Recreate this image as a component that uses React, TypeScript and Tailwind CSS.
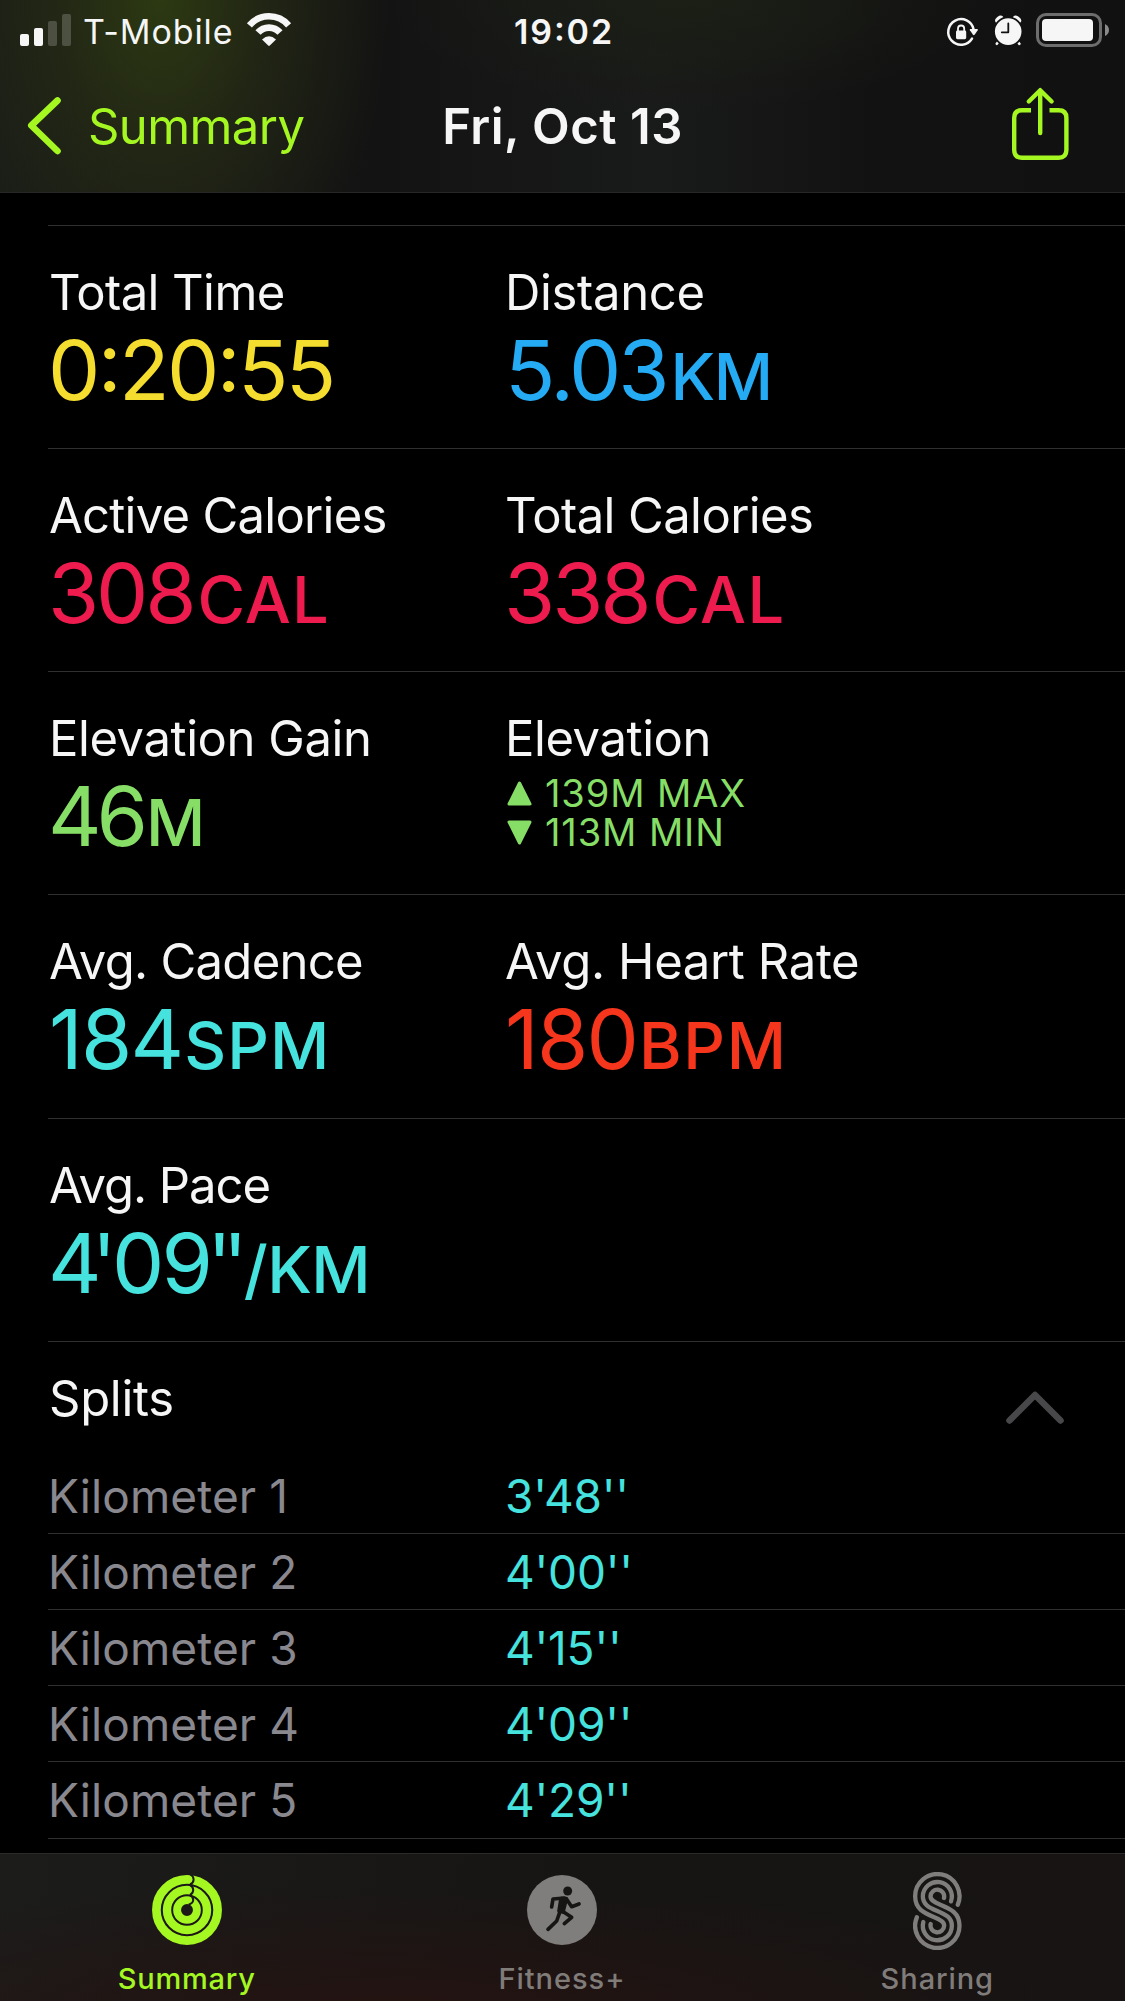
import React from 'react';

interface Metric {
    label: string;
    labelClass: string;
    value?: React.ReactNode;
    valueClass?: string;
    unit?: string;
    unitClass?: string;
    color: string;
    range?: boolean;
}

const METRIC_ROWS: Metric[][] = [
    [
        { label: 'Total Time', labelClass: 'tracking-[-0.59px]', value: '0:20:55', valueClass: 'tracking-[-2.65px]', color: 'text-[#f4dd2e]' },
        { label: 'Distance', labelClass: 'tracking-[-0.33px]', value: '5.03', valueClass: 'pl-px tracking-[-3.03px]', unit: 'KM', unitClass: 'ml-1 tracking-[-1.5px]', color: 'text-[#24abf3]' },
    ],
    [
        { label: 'Active Calories', labelClass: 'tracking-[-0.74px]', value: '308', valueClass: 'tracking-[-3.2px]', unit: 'CAL', unitClass: 'ml-1 tracking-[1.1px]', color: 'text-[#ee1b4e]' },
        { label: 'Total Calories', labelClass: 'tracking-[-0.6px]', value: '338', valueClass: 'tracking-[-3.12px]', unit: 'CAL', unitClass: 'ml-1 tracking-[1.3px]', color: 'text-[#ee1b4e]' },
    ],
    [
        { label: 'Elevation Gain', labelClass: 'tracking-[-0.44px]', value: '46', valueClass: 'tracking-[-5px]', unit: 'M', unitClass: 'ml-[3px]', color: 'text-[#87de67]' },
        { label: 'Elevation', labelClass: 'tracking-[-0.44px]', color: 'text-[#87de67]', range: true },
    ],
    [
        { label: 'Avg. Cadence', labelClass: 'tracking-[-0.71px]', value: '184', valueClass: 'pl-px tracking-[-1.8px]', unit: 'SPM', unitClass: 'ml-0.5 tracking-[1px]', color: 'text-[#46e2de]' },
        { label: 'Avg. Heart Rate', labelClass: 'tracking-[-0.38px]', value: '180', valueClass: 'pl-px tracking-[-1.8px]', unit: 'BPM', unitClass: 'ml-0.5 tracking-[1.6px]', color: 'text-[#f6361c]' },
    ],
    [
        {
            label: 'Avg. Pace',
            labelClass: 'tracking-[-1.04px]',
            value: (
                <>
                    <span className="tracking-[-10px]">4</span>
                    <span className="tracking-[-4.5px]">'</span>
                    <span className="tracking-[-3px]">0</span>
                    <span className="tracking-[-6px]">9</span>
                    <span className="tracking-[-9px]">''</span>
                </>
            ),
            unit: '/KM',
            unitClass: 'ml-[5px] tracking-[-0.5px]',
            color: 'text-[#46e2de]',
        },
    ],
];

const SPLITS = [
    { name: 'Kilometer 1', pace: "3'48''" },
    { name: 'Kilometer 2', pace: "4'00''" },
    { name: 'Kilometer 3', pace: "4'15''" },
    { name: 'Kilometer 4', pace: "4'09''" },
    { name: 'Kilometer 5', pace: "4'29''" },
];

const StatusBar: React.FC = () => (
    <div className="grid h-16 grid-cols-[1fr_auto_1fr] items-center text-[34px] leading-[42px] text-[#f5f6f5]">
        <div className="flex items-center pl-5">
            <svg width="51" height="64" viewBox="20 0 51 64" fill="currentColor">
                <rect x="20" y="34" width="9" height="12" rx="2" />
                <rect x="34" y="28" width="9" height="18" rx="2" />
                <rect x="48" y="21" width="9" height="25" rx="2" opacity="0.2" />
                <rect x="62" y="14" width="9" height="32" rx="2" opacity="0.2" />
            </svg>
            <span className="ml-3 tracking-[0.88px]">T-Mobile</span>
            <svg className="ml-[13px]" width="46" height="64" viewBox="246 0 46 64" fill="none" stroke="currentColor">
                <path d="M249.4 25.4A25.7 25.7 0 0 1 288.6 25.4" strokeWidth="6.6" />
                <path d="M258 32.6A14.6 14.6 0 0 1 280 32.6" strokeWidth="6.8" />
                <path d="M262 39.4Q269 33 276 39.4L269.8 45.6Q269 46.3 268.2 45.6Z" fill="currentColor" stroke="none" />
            </svg>
        </div>
        <span className="pl-[3px] font-semibold tracking-[1.9px] [font-feature-settings:'calt']">19:02</span>
        <div className="flex justify-end pr-[15px]">
            <svg width="170" height="64" viewBox="940 0 170 64" fill="currentColor">
                {/* orientation lock */}
                <path d="M972 38.6A12.8 12.8 0 1 1 973.6 29.5" fill="none" stroke="currentColor" strokeWidth="2.5" strokeLinecap="round" />
                <path d="M970.4 29H977.2Q978.4 29.2 977.7 30.3L974.6 34.8Q973.8 35.7 973 34.8L969.9 30.3Q969.3 29.2 970.4 29Z" />
                <rect x="956" y="30.6" width="10.2" height="8.6" rx="1.4" />
                <path d="M958 31V28.6A3.1 3.1 0 0 1 964.2 28.6V31" fill="none" stroke="currentColor" strokeWidth="1.8" />
                {/* alarm */}
                <path d="M999 41L996.8 43.8M1017 41L1019.4 43.8" stroke="currentColor" strokeWidth="2.6" strokeLinecap="round" />
                <ellipse cx="999.3" cy="19.4" rx="4.6" ry="3.2" transform="rotate(-38 999.3 19.4)" />
                <ellipse cx="1017" cy="19.4" rx="4.6" ry="3.2" transform="rotate(38 1017 19.4)" />
                <circle cx="1008.2" cy="31.6" r="14.2" stroke="#121212" strokeWidth="1.8" />
                <path d="M1008.3 23.5V32.3H1001.8" fill="none" stroke="#121212" strokeWidth="1.8" strokeLinecap="round" strokeLinejoin="round" />
                {/* battery */}
                <rect x="1037.5" y="14.5" width="63" height="31" rx="8.5" fill="none" stroke="#6d6d6d" strokeWidth="3" />
                <rect x="1042" y="19" width="51" height="22" rx="4" />
                <path d="M1105 24Q1109 26 1109 30T1105 36Z" fill="#8a8a8a" />
            </svg>
        </div>
    </div>
);

const NavBar: React.FC = () => (
    <div className="grid h-[124px] grid-cols-[1fr_auto_1fr] items-center text-[49px] leading-[60px]">
        <div className="flex items-center pl-[26px] text-[#a5f722]">
            <svg width="37" height="62" viewBox="0 0 37 62" fill="none" stroke="currentColor" strokeWidth="6.6" strokeLinecap="round" strokeLinejoin="round">
                <path d="M31.5 5.5L5.3 30.5L31.5 56" />
            </svg>
            <span className="ml-[25px] pt-[2px] tracking-[-0.6px]">Summary</span>
        </div>
        <h1 className="pt-[2px] font-semibold tracking-[0.5px] text-[#f5f6f5]">Fri, Oct 13</h1>
        <div className="flex justify-end pr-[55px] text-[#a5f722]">
            <svg className="-mt-1" width="60" height="76" viewBox="1010 86 60 76" fill="none" stroke="currentColor" strokeWidth="4.4">
                <path d="M1031 110.3H1022Q1014.2 110.3 1014.2 118V150Q1014.2 157.7 1022 157.7H1058.6Q1066.4 157.7 1066.4 150V118Q1066.4 110.3 1058.6 110.3H1049.5" />
                <path d="M1040.2 90.5V133M1028.8 101.5L1040.2 90.2L1051.6 101.5" strokeLinecap="round" strokeLinejoin="round" />
            </svg>
        </div>
    </div>
);

const Triangle: React.FC<{ down?: boolean }> = ({ down }) => (
    <svg className={down ? 'rotate-180' : ''} width="25" height="25" viewBox="0 0 25 25" fill="currentColor" stroke="currentColor" strokeWidth="3" strokeLinejoin="round">
        <path d="M12.5 2L23 23H2Z" />
    </svg>
);

const MetricCell: React.FC<{ metric: Metric }> = ({ metric }) => (
    <div className="w-[456px] whitespace-nowrap">
        <div className={`pl-px text-[49px] leading-[60px] text-[#f6f6f6] ${metric.labelClass}`}>{metric.label}</div>
        {metric.range ? (
            <div className={`mt-[5px] pl-[3px] text-[38px] leading-[39px] tracking-[0.9px] ${metric.color}`}>
                <div className="flex items-center gap-[13px]"><Triangle />139M MAX</div>
                <div className="flex items-center gap-[13px]"><Triangle down />113M MIN</div>
            </div>
        ) : (
            <div className={`-mt-px flex items-baseline leading-[96px] ${metric.color}`}>
                <span className={`text-[83px] [font-feature-settings:'calt'] ${metric.valueClass ?? ''}`}>{metric.value}</span>
                {metric.unit && <span className={`text-[65px] leading-none font-medium ${metric.unitClass}`}>{metric.unit}</span>}
            </div>
        )}
    </div>
);

const SummaryIcon: React.FC = () => (
    <svg width="70" height="70" viewBox="-35 -35 70 70" fill="none">
        <g stroke="#a5f722">
            <circle r="30.6" strokeWidth="8.7" />
            <circle r="20" strokeWidth="8.4" />
            <circle r="9.9" strokeWidth="7.9" />
        </g>
        <g stroke="#1b1a19" strokeWidth="2">
            <path d="M3.4 -35.5Q6.6 -34 6.6 -30.6T3 -25.5" />
            <path d="M3 -25Q6.2 -23.4 6.2 -20T3 -15" />
            <path d="M3 -14.6Q6.2 -13 6.2 -9.9T1.6 -5.2" />
        </g>
    </svg>
);

const FitnessIcon: React.FC = () => (
    <svg width="70" height="70" viewBox="138 105 210 210" fill="none">
        <circle cx="243" cy="210" r="105" fill="#807e7c" />
        <circle cx="260" cy="153" r="13.5" fill="#171514" />
        <g stroke="#171514" strokeWidth="11" strokeLinecap="round" strokeLinejoin="round">
            <path d="M250 174L216 177L212 201" />
            <path d="M257 178L272 200L294 192" />
            <path d="M242 212L272 232L250 251" />
            <path d="M238 212L227 243L201 268" />
            <path d="M240 176L256 176L246 216L234 213Z" fill="#171514" />
        </g>
    </svg>
);

const SharingIcon: React.FC = () => (
    <svg width="49" height="78" viewBox="186 93 147 234" fill="none" stroke="#807e7c" strokeWidth="13" strokeLinecap="round">
        <path d="M320.5 191A66.5 66.5 0 1 0 192.5 166C192.5 204 218 216 250 229C270 237 279.5 243 279.5 254A20.5 20.5 0 1 1 239 249" />
        <path d="M300 181A43.5 43.5 0 1 0 215.5 166C215.5 190 233 199 259 210C285 221 302.5 230 302.5 254A43.5 43.5 0 1 1 217 243" />
        <path d="M279 171A20.5 20.5 0 1 0 238.5 166C238.5 177 248 183 268 191C300 204 325.5 216 325.5 254A66.5 66.5 0 1 1 197.5 229" />
    </svg>
);

const TabBar: React.FC = () => (
    <nav className="flex h-[148px] border-t border-[#2b2b2a] bg-[radial-gradient(ellipse_60%_90%_at_35%_110%,#241311_0%,transparent_100%),linear-gradient(100deg,#1c1c1b_0%,#161514_50%,#171413_100%)] text-[29px] leading-[36px] font-medium text-[#807c7a]">
        <div className="flex flex-1 flex-col items-center pr-[2px]">
            <div className="mt-4 flex h-20 items-center"><SummaryIcon /></div>
            <span className="mt-[11px] tracking-[0.78px] text-[#a5f722]">Summary</span>
        </div>
        <div className="flex flex-1 flex-col items-center pr-[2px]">
            <div className="mt-4 flex h-20 items-center"><FitnessIcon /></div>
            <span className="mt-[11px] tracking-[0.97px]">Fitness+</span>
        </div>
        <div className="flex flex-1 flex-col items-center pr-px">
            <div className="mt-4 flex h-20 items-center pt-px"><SharingIcon /></div>
            <span className="mt-[11px] tracking-[0.92px]">Sharing</span>
        </div>
    </nav>
);

const App: React.FC = () => {
    return (
        <div className="flex h-[2001px] w-[1125px] flex-col overflow-hidden bg-black font-['Inter',sans-serif]">
            <header className="h-[193px] shrink-0 border-b border-[#262727] bg-[radial-gradient(ellipse_230px_340px_at_160px_0px,#2c3912_0%,rgba(40,46,20,0.65)_45%,transparent_100%),radial-gradient(ellipse_300px_110px_at_690px_0px,#1b1f15_0%,transparent_100%),linear-gradient(90deg,#191b18_0%,#131313_34%,#191a1a_58%,#121212_78%,#111111_100%)]">
                <StatusBar />
                <NavBar />
            </header>

            <main className="min-h-0 flex-1 overflow-hidden pt-[31.7px] pl-12">
                {METRIC_ROWS.map((row, i) => (
                    <section key={i} className="flex h-[223.25px] border-t border-[#303031] pt-[37px]">
                        {row.map(metric => <MetricCell key={metric.label} metric={metric} />)}
                    </section>
                ))}

                {/* Splits */}
                <section className="flex h-[117px] items-start justify-between border-t border-[#303031] pt-[27px] pr-[59px]">
                    <h2 className="pl-px text-[49px] leading-[60px] tracking-[-0.29px] text-[#f6f6f6]">Splits</h2>
                    <svg className="mt-[19px]" width="62" height="38" viewBox="0 0 62 38" fill="none" stroke="#48484a" strokeWidth="6.5" strokeLinecap="round" strokeLinejoin="round">
                        <path d="M5.5 32.5L31 7L56.5 32.5" />
                    </svg>
                </section>
                {SPLITS.map(split => (
                    <div key={split.name} className="flex h-[76px] border-b border-[#303031] pt-[10px] text-[46px] leading-[56px] last:h-[77px]">
                        <span className="w-[456px] tracking-[0.1px] text-[#8a888f]">{split.name}</span>
                        <span className="pl-px tracking-[-0.2px] text-[#46e2de]">{split.pace}</span>
                    </div>
                ))}
            </main>

            <TabBar />
        </div>
    );
};

export default App;
